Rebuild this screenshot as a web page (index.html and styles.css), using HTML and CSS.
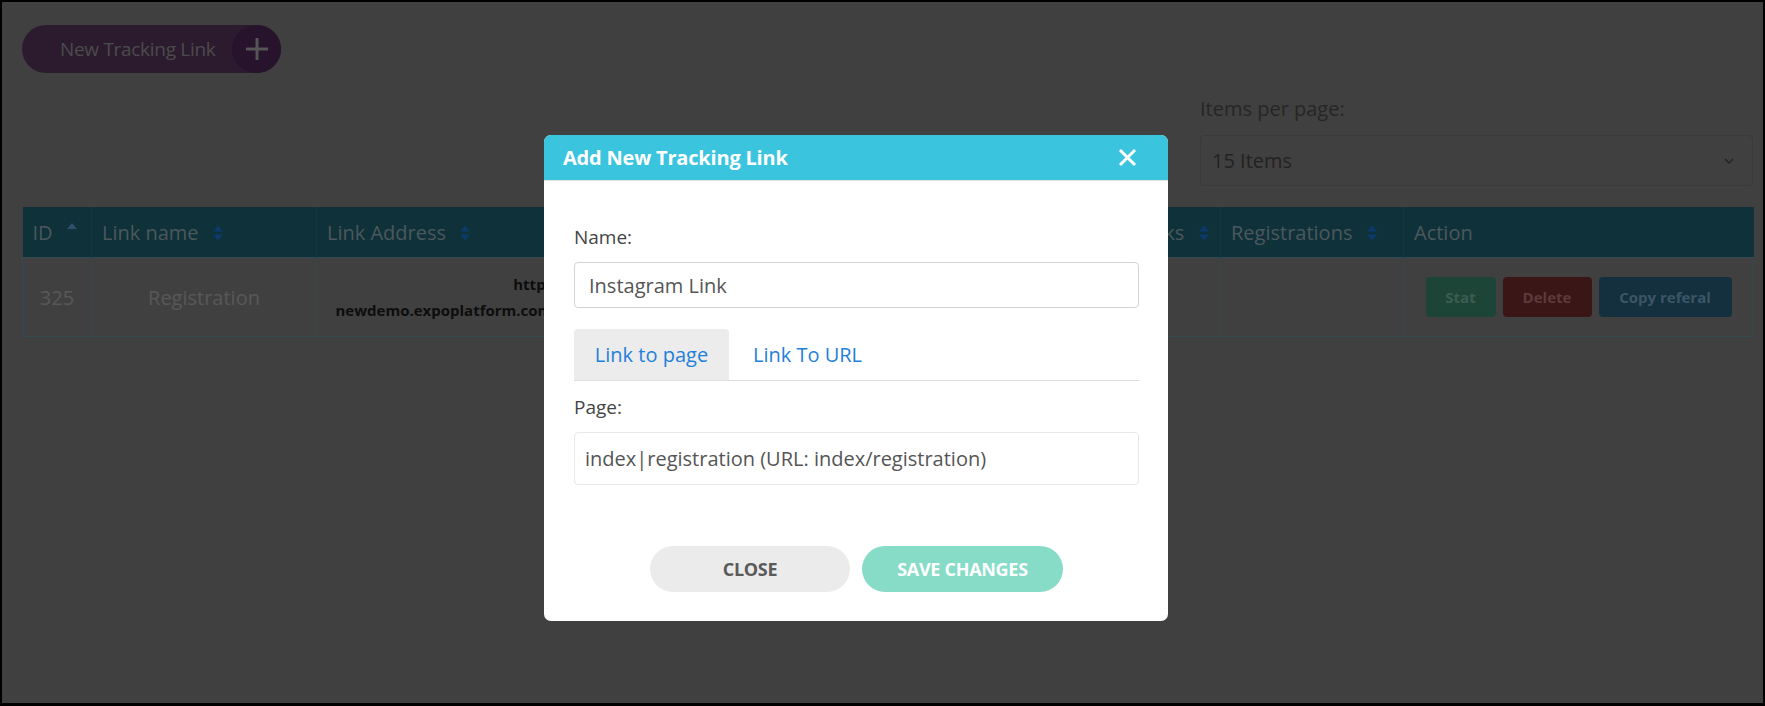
FILE: index.html
```html
<!DOCTYPE html>
<html>
<head>
    <meta charset="utf-8" />
    <title>Tracking Links</title>
    <link rel="stylesheet" href="styles.css">
</head>
<body>
    <div class="screen">
        <div class="new-link">
            <span>New Tracking Link</span>
            <span class="plus">
                <svg width="24" height="24" viewBox="0 0 24 24"><path d="M12 1v22M1 12h22" stroke="#555" stroke-width="3" fill="none"/></svg>
            </span>
        </div>

        <div class="per-page">
            <div class="per-page-label">Items per page:</div>
            <div class="select">
                <span>15 Items</span>
                <svg width="10" height="6" viewBox="0 0 10 6"><path d="M1 1l4 4 4-4" stroke="#222" stroke-width="1.4" fill="none"/></svg>
            </div>
        </div>

        <table class="links">
            <colgroup>
                <col style="width: 69px">
                <col style="width: 225px">
                <col style="width: 450px">
                <col style="width: 355px">
                <col style="width: 99px">
                <col style="width: 183px">
                <col style="width: 350px">
            </colgroup>
            <thead>
                <tr>
                    <th>ID <svg class="sort sorted" viewBox="0 0 12 18"><path d="M1 7l5-6 5 6z"/></svg></th>
                    <th>Link name <svg class="sort" viewBox="0 0 12 18"><path d="M1 7.5l5-6 5 6zM1 10.5l5 6 5-6z"/></svg></th>
                    <th>Link Address <svg class="sort" viewBox="0 0 12 18"><path d="M1 7.5l5-6 5 6zM1 10.5l5 6 5-6z"/></svg></th>
                    <th>Type <svg class="sort" viewBox="0 0 12 18"><path d="M1 7.5l5-6 5 6zM1 10.5l5 6 5-6z"/></svg></th>
                    <th>Clicks <svg class="sort" viewBox="0 0 12 18"><path d="M1 7.5l5-6 5 6zM1 10.5l5 6 5-6z"/></svg></th>
                    <th>Registrations <svg class="sort" viewBox="0 0 12 18"><path d="M1 7.5l5-6 5 6zM1 10.5l5 6 5-6z"/></svg></th>
                    <th>Action</th>
                </tr>
            </thead>
            <tbody>
                <tr>
                    <td class="center">325</td>
                    <td class="center">Registration</td>
                    <td class="address">https://<br>newdemo.expoplatform.com/index/registration?tl=325</td>
                    <td class="center">Page</td>
                    <td></td>
                    <td></td>
                    <td class="center">
                        <div class="actions">
                            <span class="btn stat">Stat</span>
                            <span class="btn delete">Delete</span>
                            <span class="btn copy">Copy referal</span>
                        </div>
                    </td>
                </tr>
            </tbody>
        </table>

        <div class="modal">
            <div class="modal-header">
                <span>Add New Tracking Link</span>
                <svg width="19" height="19" viewBox="0 0 19 19"><path d="M2 2l15 15M17 2L2 17" stroke="#fff" stroke-width="3" fill="none"/></svg>
            </div>
            <div class="modal-body">
                <label class="label">Name:</label>
                <div class="input name-input">Instagram Link</div>
                <div class="tabs">
                    <span class="tab active">Link to page</span>
                    <span class="tab">Link To URL</span>
                </div>
                <label class="label page-label">Page:</label>
                <div class="input page-input">index|registration (URL: index/registration)</div>
                <div class="modal-footer">
                    <span class="pill close">CLOSE</span>
                    <span class="pill save">SAVE CHANGES</span>
                </div>
            </div>
        </div>
    </div>
</body>
</html>
```

FILE: styles.css
```css
html, body {
    margin: 0;
    font-family: "Open Sans", "DejaVu Sans", sans-serif;
}

.screen {
    position: relative;
    height: 706px;
    box-sizing: border-box;
    border: 2px solid #000;
    border-bottom-width: 3px;
    background-color: #404040;
    padding: 23px 10px 0 20px;
    overflow: hidden;
}

/* page under the backdrop, already dimmed */
.new-link {
    display: flex;
    align-items: center;
    width: 259px;
    height: 48px;
    box-sizing: border-box;
    padding-left: 38px;
    border-radius: 24px;
    background-color: #2c1b2f;
    color: #4b4b4b;
    font-size: 19px;
    letter-spacing: -0.3px;
}

.new-link .plus {
    margin-left: auto;
    width: 49px;
    height: 48px;
    border-radius: 50%;
    background-color: #27132c;
    display: flex;
    align-items: center;
    justify-content: center;
}

.per-page {
    width: 553px;
    margin: 24px 0 0 auto;
}

.per-page-label {
    font-size: 20px;
    line-height: 24px;
    color: #262626;
}

.select {
    margin-top: 14px;
    height: 51px;
    box-sizing: border-box;
    border: 1px solid #3a3a3a;
    border-radius: 4px;
    padding: 0 18px 0 11px;
    display: flex;
    align-items: center;
    justify-content: space-between;
    font-size: 20px;
    color: #222;
}

.links {
    margin-top: 21px;
    width: 1731px;
    table-layout: fixed;
    border-collapse: collapse;
    font-size: 20px;
}

.links th {
    height: 50px;
    padding: 0 10px;
    text-align: left;
    font-weight: normal;
    background-color: #0f3139;
    color: #4c585c;
    border-left: 1px solid #16383f;
    white-space: nowrap;
}

.links th:first-child {
    border-left: none;
}

.sort {
    width: 12px;
    height: 18px;
    margin-left: 8px;
    vertical-align: -2px;
    fill: #0c3a6a;
}

.sort.sorted {
    fill: #2e4e6c;
    margin-left: 8px;
    vertical-align: 0;
}

.links td {
    height: 78px;
    padding: 0 10px;
    border: 1px solid #344a50;
    color: #585858;
}

.center {
    text-align: center;
}

.links .address {
    text-align: center;
    font-size: 15px;
    font-weight: bold;
    line-height: 26px;
    color: #0d0d0d;
    white-space: nowrap;
}

.actions {
    display: flex;
    justify-content: center;
    gap: 7px;
}

.btn {
    height: 40px;
    border-radius: 4px;
    font-size: 15px;
    font-weight: bold;
    display: flex;
    align-items: center;
    justify-content: center;
}

.stat {
    width: 70px;
    background-color: #1c4537;
    color: #3b5d50;
}

.delete {
    width: 89px;
    background-color: #3b1616;
    color: #5e3a3a;
}

.copy {
    width: 133px;
    background-color: #14303f;
    color: #3c5566;
}

/* dialog on top */
.modal {
    position: absolute;
    left: 542px;
    top: 133px;
    width: 624px;
    background-color: #fff;
    border-radius: 7px;
    overflow: hidden;
}

.modal-header {
    height: 45px;
    border-bottom: 1px solid #e4e4e4;
    background-color: #3bc4de;
    color: #fff;
    font-size: 20px;
    font-weight: bold;
    letter-spacing: -0.2px;
    padding: 0 31px 0 19px;
    display: flex;
    align-items: center;
    justify-content: space-between;
}

.modal-body {
    padding: 44px 29px 29px 30px;
    display: flex;
    flex-direction: column;
}

.label {
    font-size: 19px;
    line-height: 24px;
    color: #444;
}

.input {
    margin-top: 13px;
    box-sizing: border-box;
    border-radius: 4px;
    display: flex;
    align-items: center;
    font-size: 20px;
    color: #555;
}

.name-input {
    height: 46px;
    border: 1px solid #d3d3d3;
    padding: 0 14px;
}

.page-input {
    height: 53px;
    border: 1px solid #e8e8e8;
    padding: 0 10px;
}

.tabs {
    margin-top: 21px;
    height: 51px;
    border-bottom: 1px solid #ddd;
    display: flex;
}

.tab {
    padding: 0 24px 0 24px;
    display: flex;
    align-items: center;
    font-size: 20px;
    color: #1f80db;
    border-radius: 4px 4px 0 0;
}

.tab.active {
    width: 155px;
    box-sizing: border-box;
    padding: 0;
    justify-content: center;
    background-color: #ececec;
}

.page-label {
    margin-top: 14px;
}

.modal-footer {
    margin-top: 61px;
    display: flex;
    justify-content: center;
    gap: 12px;
}

.pill {
    width: 200px;
    height: 46px;
    border-radius: 23px;
    display: flex;
    align-items: center;
    justify-content: center;
    font-size: 18px;
    font-weight: bold;
    letter-spacing: -0.3px;
}

.close {
    background-color: #ebebeb;
    color: #5a5a5a;
}

.save {
    width: 201px;
    background-color: #86dcc7;
    color: #fff;
}
```
